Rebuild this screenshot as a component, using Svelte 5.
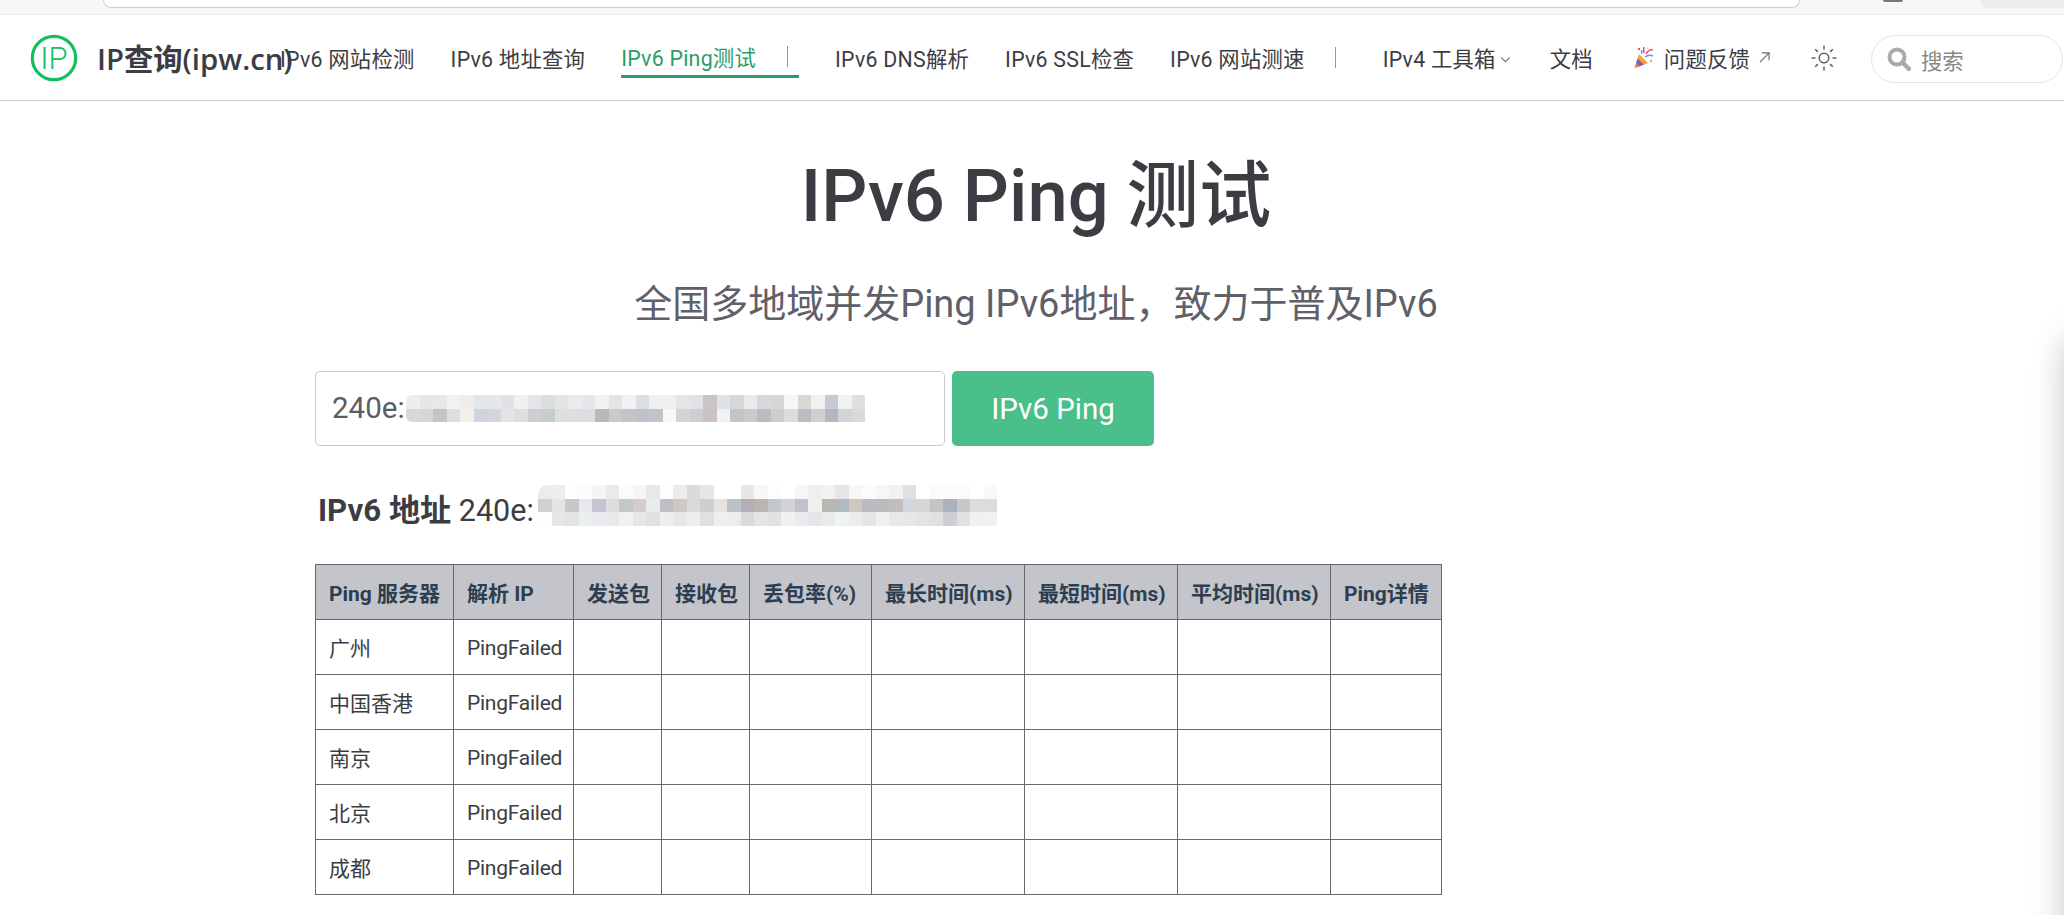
<script>
  const navLeft = ['IPv6 网站检测', 'IPv6 地址查询'];
  const navMid = ['IPv6 DNS解析', 'IPv6 SSL检查', 'IPv6 网站测速'];

  const columns = [
    { label: 'Ping 服务器', width: 138 },
    { label: '解析 IP', width: 120 },
    { label: '发送包', width: 88 },
    { label: '接收包', width: 88 },
    { label: '丢包率(%)', width: 122 },
    { label: '最长时间(ms)', width: 153 },
    { label: '最短时间(ms)', width: 153 },
    { label: '平均时间(ms)', width: 153 },
    { label: 'Ping详情', width: 111 }
  ];
  const servers = ['广州', '中国香港', '南京', '北京', '成都'];

  // redacted address: the pixelated blocks seen in the screenshot
  const inputMosaic = [
    'eee e5e6e8 e7e8ea f1f1f2 eeedeb e3e6eb e6e7ea dfe3e7 f1eff0 e4e5e7 dadee1 e4e4e2 eaebed e6e7e9 f1f1f1 e4e4e4 f2f2f2 dbdfe3 eff0f2 f0f0f1 e4e5e8 e2e2e4 c9c5c6 dfe2e6 d7d7d8 ebebea d7d8dc d6d6da f7f7f7 d9d8d6 f1f1f0 c8cad3 f1f2f4 e0dfdd',
    'd8d8da d6d6d8 c4c4c5 dcdee2 f2eeea ccd5dd d6d6d8 e4e4e3 e0dedd cfcdd1 c5cdcd dcdee0 dfdfdf dadde2 b9b8b9 c9cacd c5c4c9 bfc2c9 c1c5ca f8f8f8 d4d4d5 cecdd3 cbc3c3 eff3f3 bfc7c4 c9cacd bcbcc0 cdcdcb dedbdb bdbcc2 d0d0d2 b5b7c0 d0d6d8 d9d8da'
  ].flatMap((row) => row.split(' '));

  const resultMosaic = [
    'ececec ededed fdfdfd fcfcfc f5f5f5 ebebeb fbfbfc f8f6f5 e8e8e8 fdfdff ececed d9dade e6e6e6 ffffff ffffff e7e7e7 f8f7f5 fdfdff ffffff f6f6f6 efefee f2f2f2 e5e5e7 f8f7f5 fbfbfb f7f6f4 f1f1ef e0e0e4 ffffff fbfbfb fbfbfb fbfbfb ffffff f8f9fa',
    'd1d1d1 e5e4e2 c8c8ca e8e9ec c3c5d1 e0dcda c7c7cb d5cccd e9ebee bfbfc3 cdc8c4 dadad9 cfcfcf e7e3df bcc2c9 b3afb8 bbb4b0 c1c7cc d2d3d7 c1c1cb f0f0ee b9b7b4 afbac2 cdc8c1 bbbbc0 bcbcbe c0bebe d2d6dd d4d6d5 c5c4c4 aab3bb c9c8c7 dcdcda dbdcde',
    'fdfdfd e6e6e6 e2e3e6 ecefef eaebf0 e9e9ea f1f1f3 e8e5e5 e0e1e4 ecefee e8e7e6 eeeeee e0e0e1 f0efed e9edef dadadb e6e5e3 e1e2e4 eff1f0 e9e9f0 e6e6e7 e9eaeb eff3f3 ecece8 e5e5e6 f0f0ee e8e8e6 e6e7e8 e2e3e5 e0e0de cdcfd4 e2e1df f0f0f1 f1f1f2'
  ].flatMap((row) => row.split(' '));
</script>

<div class="browser-strip">
  <div class="urlbar"></div>
  <div class="strip-dot"></div>
  <div class="strip-pill"></div>
</div>

<header class="topbar">
  <a class="brand" href="#home">
    <svg class="logo" viewBox="0 0 48 48" aria-hidden="true">
      <circle cx="24" cy="24" r="21.7" fill="none" stroke="#12c05f" stroke-width="3.2"/>
      <text x="24" y="35" text-anchor="middle" font-size="31" font-weight="300" fill="#12c05f"
            font-family="Roboto, sans-serif">IP</text>
    </svg>
    <span class="brand-name">IP查询(ipw.cn)</span>
  </a>

  <nav class="nav">
    {#each navLeft as item}
      <a class="nav-link" href="#n">{item}</a>
    {/each}
    <a class="nav-link active" href="#n">IPv6 Ping测试<i class="sep green"></i></a>
    {#each navMid as item}
      <a class="nav-link" href="#n">{item}</a>
    {/each}
    <i class="sep brown"></i>
    <a class="nav-link tools" href="#n">
      IPv4 工具箱
      <svg class="chevron" viewBox="0 0 12 8" aria-hidden="true">
        <path d="M1 1.5 L6 6.5 L11 1.5" fill="none" stroke="#777" stroke-width="1.3"/>
      </svg>
    </a>
    <a class="nav-link docs" href="#n">文档</a>
    <a class="nav-link feedback" href="#n">
      <!-- party popper emoji -->
      <svg class="popper" viewBox="0 0 20 22" aria-hidden="true">
        <path d="M0.5 21.5 L5 7 L14 16 Z" fill="#f2a33a"/>
        <path d="M2.2 16 L3.5 11.5 L9.8 17.5 L5.5 19.3 Z" fill="#7d5cc4"/>
        <path d="M1 20 L2.2 16 L5.5 19.3 Z" fill="#e8743b"/>
        <rect x="4" y="1" width="2" height="2" fill="#f0479a"/>
        <rect x="9" y="0" width="1.6" height="6" fill="#f0479a"/>
        <rect x="7" y="3" width="1.4" height="4" fill="#3aa8f0"/>
        <path d="M12 7 Q15 2 19 3" fill="none" stroke="#f0479a" stroke-width="1.5"/>
        <path d="M11 10 Q15 7 19 9" fill="none" stroke="#3aa8f0" stroke-width="1.5"/>
        <rect x="16" y="13" width="2" height="2" fill="#f2a33a"/>
        <rect x="13" y="0.5" width="1.6" height="1.6" fill="#ffc83d"/>
      </svg>
      问题反馈
      <svg class="ext" viewBox="0 0 12 12" aria-hidden="true">
        <path d="M1 11 L11 1 M3 1 H11 V9" fill="none" stroke="#666" stroke-width="1.2"/>
      </svg>
    </a>
    <svg class="sun" viewBox="0 0 26 26" aria-hidden="true">
      <circle cx="13" cy="13" r="4.8" fill="none" stroke="#666" stroke-width="1.6"/>
      <path d="M13 0.5V4.5M13 21.5V25.5M0.5 13H4.5M21.5 13H25.5M4.2 4.2L6.9 6.9M19.1 19.1L21.8 21.8M4.2 21.8L6.9 19.1M19.1 6.9L21.8 4.2"
            fill="none" stroke="#666" stroke-width="1.6"/>
    </svg>
  </nav>

  <div class="search">
    <svg class="search-icon" viewBox="0 0 24 24" aria-hidden="true">
      <circle cx="10" cy="10" r="7.5" fill="none" stroke="#aaa" stroke-width="4"/>
      <path d="M15.5 15.5 L22 22" stroke="#aaa" stroke-width="4.5" stroke-linecap="round"/>
    </svg>
    <span>搜索</span>
  </div>
</header>

<main class="page">
  <h1>IPv6 Ping 测试</h1>
  <p class="lead">全国多地域并发Ping IPv6地址，致力于普及IPv6</p>

  <div class="ping-form">
    <div class="address-input">
      240e:
      <div class="mosaic in-input">
        {#each inputMosaic as c}<b style="background:#{c}"></b>{/each}
      </div>
    </div>
    <button class="ping-btn">IPv6 Ping</button>
  </div>

  <div class="address-line">
    <strong>IPv6 地址</strong> 240e:
    <div class="mosaic in-result">
      {#each resultMosaic as c}<b style="background:#{c}"></b>{/each}
    </div>
  </div>

  <table>
    <colgroup>
      {#each columns as col}<col style="width:{col.width}px" />{/each}
    </colgroup>
    <thead>
      <tr>
        {#each columns as col}<th>{col.label}</th>{/each}
      </tr>
    </thead>
    <tbody>
      {#each servers as server}
        <tr>
          <td>{server}</td>
          <td>PingFailed</td>
          {#each columns.slice(2) as col}<td></td>{/each}
        </tr>
      {/each}
    </tbody>
  </table>
</main>

<div class="drawer-shadow"></div>

<style>
  :global(body) {
    background: #fff;
    overflow: hidden;
    font-family: Roboto, "Noto Sans CJK SC", sans-serif;
    color: #3c3c43;
  }

  .browser-strip {
    display: flex;
    height: 15px;
    background: #f7f7f7;
    border-bottom: 1px solid #eee;
    box-sizing: border-box;
  }
  .urlbar {
    width: 1697px;
    height: 8px;
    margin-left: 103px;
    background: #fff;
    border: 1px solid #ccc;
    border-top: 0;
    border-radius: 0 0 14px 14px;
    box-sizing: border-box;
  }
  .strip-dot {
    width: 20px;
    height: 2px;
    margin-left: 83px;
    background: #777;
    border-radius: 0 0 10px 10px;
  }
  .strip-pill {
    flex: 1;
    height: 8px;
    margin-left: 77px;
    background: #eee;
    border-radius: 0 0 0 10px;
  }

  .topbar {
    display: flex;
    align-items: center;
    height: 86px;
    border-bottom: 1px solid #ccc;
    box-sizing: border-box;
  }
  .brand {
    display: flex;
    align-items: center;
    flex: none;
    width: 250px;
    margin-left: 30px;
    gap: 19px;
    color: #3c3c43;
    text-decoration: none;
    white-space: nowrap;
  }
  .logo {
    width: 48px;
    height: 48px;
    flex: none;
  }
  .brand-name {
    font-family: "Open Sans", "Noto Sans CJK SC", sans-serif;
    font-size: 29.3px;
    font-weight: 600;
  }

  .nav {
    display: flex;
    align-items: center;
    flex: none;
    width: 1591px;
    white-space: nowrap;
    position: relative;
  }
  .nav-link {
    display: flex;
    align-items: center;
    height: 40px;
    margin-right: 36px;
    font-size: 21.33px;
    letter-spacing: 0.25px;
    color: #3c3c43;
    text-decoration: none;
    box-sizing: border-box;
  }
  .active {
    color: #2a9d68;
    border-bottom: 3px solid #2e9c69;
  }
  .sep {
    display: block;
    width: 1px;
    height: 21px;
  }
  .sep.green {
    margin-left: 31px;
    margin-right: 11px;
    background: #5fb48c;
  }
  .sep.brown {
    margin-left: -6px;
    margin-right: 47px;
    background: #b08f7c;
  }
  .tools {
    margin-right: 39px;
  }
  .docs {
    margin-right: 41px;
  }
  .chevron {
    width: 11px;
    height: 7px;
    margin: 4px 0 0 4px;
  }
  .popper {
    width: 20px;
    height: 22px;
    margin-right: 10px;
  }
  .ext {
    width: 11px;
    height: 11px;
    margin-left: 9px;
  }
  .feedback {
    margin-right: 41px;
  }
  .sun {
    width: 26px;
    height: 26px;
  }

  .search {
    display: flex;
    align-items: center;
    flex: none;
    width: 192px;
    height: 48px;
    margin-top: 3px;
    padding-left: 15px;
    gap: 10px;
    border: 1px solid #e3e3e3;
    border-radius: 24px;
    box-sizing: border-box;
    color: #888;
    font-size: 21.33px;
  }
  .search-icon {
    width: 24px;
    height: 24px;
  }

  .page {
    width: 1442px;
    margin-left: 315px;
  }
  h1 {
    margin: 52px 0 0;
    font-size: 72.3px;
    line-height: 88px;
    font-weight: 500;
    text-align: center;
    color: #3c3c43;
  }
  .lead {
    margin: 38px 0 0;
    font-size: 38px;
    line-height: 50px;
    font-weight: 400;
    text-align: center;
    color: #606068;
  }

  .ping-form {
    display: flex;
    gap: 7px;
    margin-top: 42px;
  }
  .address-input {
    position: relative;
    width: 630px;
    height: 75px;
    padding-left: 16px;
    border: 1px solid #c9c9cf;
    border-radius: 5px;
    box-sizing: border-box;
    font-size: 29.5px;
    line-height: 73px;
    color: #5c5c63;
  }
  .ping-btn {
    width: 202px;
    height: 75px;
    border: 0;
    border-radius: 5px;
    background: #4bbf8a;
    color: #fff;
    font-family: inherit;
    font-size: 29.5px;
  }

  .mosaic {
    position: absolute;
    display: grid;
    grid-template-columns: repeat(34, 13.5px);
    grid-auto-rows: 13.5px;
  }
  .mosaic b {
    display: block;
  }
  .in-input {
    left: 90px;
    top: 23px;
    border-radius: 6px 0 0 6px;
    overflow: hidden;
  }
  .in-result {
    left: 220px;
    top: -3px;
    border-radius: 10px 0 0 14px;
    overflow: hidden;
  }

  .address-line {
    position: relative;
    margin: 42px 0 0 3px;
    height: 46px;
    font-size: 30.5px;
    line-height: 46px;
    color: #3c3c43;
  }
  .address-line strong {
    font-size: 31.2px;
    font-weight: 700;
  }

  table {
    table-layout: fixed;
    width: 1126px;
    margin-top: 30px;
    border-collapse: collapse;
    font-size: 21px;
  }
  th, td {
    height: 55px;
    padding: 0 0 0 13px;
    border: 1px solid #66666f;
    box-sizing: border-box;
    white-space: nowrap;
    text-align: left;
  }
  th {
    background: #c3c5cb;
    color: #2c3e50;
    font-weight: 700;
  }
  td {
    color: #3c3c43;
  }
  td:nth-child(2) {
    padding-top: 2px;
    letter-spacing: -0.25px;
  }

  .drawer-shadow {
    position: fixed;
    left: 2064px;
    top: 335px;
    width: 300px;
    height: 900px;
    border-radius: 24px;
    box-shadow: 0 0 34px rgba(0, 0, 0, 0.22);
  }
</style>
